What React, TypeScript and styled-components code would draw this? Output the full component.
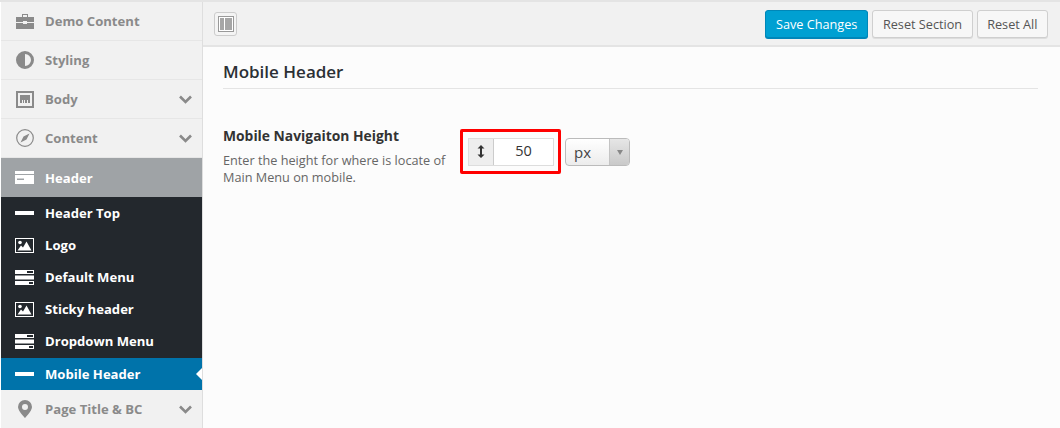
import React from 'react'
import styled, { createGlobalStyle } from 'styled-components'

const GlobalStyle = createGlobalStyle`
  html, body {
    margin: 0;
    padding: 0;
    background: #fff;
    font-family: 'Open Sans', sans-serif;
  }
`

const Page = styled.div`
  width: 1060px;
  height: 428px;
  overflow: hidden;
  display: grid;
  grid-template-columns: 202px 1fr;
  box-sizing: border-box;
  border-top: 2px solid #e4e4e4;
  padding-left: 1px;
`
const Sidebar = styled.nav`
  background: #f1f1f1;
  border-right: 1px solid #dedede;
  display: flex;
  flex-direction: column;
`
const Row = styled.div`
  height: 38px;
  border-bottom: 1px solid #e6e6e6;
  padding: 0 10px 0 14px;
  display: flex;
  align-items: center;
  gap: 11px;
  color: #8a8a8a;
  font-size: 13.1px;
  font-weight: 700;
`
const ActiveGroup = styled.div`
  height: 39px;
  background: #9fa3a6;
  padding: 0 10px 0 14px;
  display: flex;
  align-items: center;
  gap: 11px;
  color: #fff;
  font-size: 13.1px;
  font-weight: 700;
`
const SubMenu = styled.div`
  background: #23282d;
  display: flex;
  flex-direction: column;
`
const SubRow = styled.div<{ $active?: boolean }>`
  position: relative;
  height: 32px;
  margin-top: ${p => (p.$active ? '1px' : '0')};
  padding: 0 10px 0 14px;
  display: flex;
  align-items: center;
  gap: 11px;
  color: #fff;
  font-size: 13.1px;
  font-weight: 700;
  background: ${p => (p.$active ? '#0073aa' : 'transparent')};
`
const Notch = styled.span`
  position: absolute;
  right: 0;
  top: 10px;
  border: 6px solid transparent;
  border-left: 0;
  border-right-color: #fff;
`
const IconSlot = styled.span`
  width: 19px;
  height: 19px;
  flex: none;
  display: flex;
  align-items: center;
  justify-content: center;
`
const Label = styled.span`
  flex: 1;
  white-space: nowrap;
`
const Main = styled.main`
  background: #fcfcfc;
  display: flex;
  flex-direction: column;
`
const Toolbar = styled.header`
  height: 45px;
  box-sizing: border-box;
  background: #f1f1f1;
  border-bottom: 2px solid #e4e4e4;
  padding: 8px 12px 0 11px;
  display: flex;
  align-items: flex-start;
  justify-content: space-between;
`
const ToggleButton = styled.button`
  width: 23px;
  height: 24px;
  margin-top: 2px;
  padding: 0;
  background: #f4f4f4;
  border: 1px solid #ccc;
  border-radius: 3px;
  display: flex;
  align-items: center;
  justify-content: center;
`
const Actions = styled.div`
  display: flex;
  gap: 4px;
`
const Button = styled.button<{ $primary?: boolean }>`
  height: 28px;
  box-sizing: border-box;
  padding: 0 ${p => (p.$primary ? '10px' : '9.5px')};
  font-family: 'Open Sans', sans-serif;
  font-size: 12.7px;
  border-radius: 3px;
  border: 1px solid ${p => (p.$primary ? '#0087b8' : '#cfcfcf')};
  background: ${p => (p.$primary ? '#00a0d2' : '#f7f7f7')};
  color: ${p => (p.$primary ? '#fff' : '#555')};
  box-shadow: 0 1px 0 ${p => (p.$primary ? '#0085ba' : '#ddd')};
`
const Content = styled.section`
  padding: 0 22px 0 20px;
`
const Title = styled.h2`
  margin: 0;
  height: 42px;
  box-sizing: border-box;
  padding-top: 14px;
  border-bottom: 1px solid #e4e4e4;
  font-size: 17px;
  line-height: 22px;
  font-weight: 600;
  color: #2b3035;
`
const Field = styled.div`
  margin-top: 37px;
  display: flex;
  align-items: flex-start;
`
const FieldText = styled.div`
  width: 237px;
`
const FieldName = styled.div`
  font-size: 13.85px;
  line-height: 20px;
  font-weight: 700;
  color: #333;
`
const FieldHelp = styled.div`
  margin-top: 6px;
  font-size: 12.7px;
  line-height: 17px;
  color: #666;
`
const Highlight = styled.div`
  box-sizing: border-box;
  width: 101px;
  height: 45px;
  margin-top: 3px;
  padding: 6px 5px 5px;
  border: 3px solid #f00;
  border-radius: 2px;
`
const DimensionInput = styled.div`
  width: 86px;
  height: 28px;
  box-sizing: border-box;
  display: flex;
  border: 1px solid #ddd;
  background: #fff;
`
const Addon = styled.span`
  width: 25px;
  padding-bottom: 1px;
  box-sizing: border-box;
  background: #eee;
  border-right: 1px solid #ccc;
  display: flex;
  align-items: center;
  justify-content: center;
`
const Value = styled.span`
  flex: 1;
  text-align: center;
  font-size: 14.5px;
  line-height: 24px;
  color: #333;
`
const UnitSelect = styled.div`
  margin: 12px 0 0 4px;
  width: 65px;
  height: 28px;
  box-sizing: border-box;
  border: 1px solid #bbb;
  border-radius: 4px;
  background: linear-gradient(#fff, #ececec);
  display: flex;
  overflow: hidden;
`
const UnitLabel = styled.span`
  flex: 1;
  padding-left: 8px;
  font-size: 15px;
  line-height: 27px;
  color: #444;
`
const UnitArrow = styled.span`
  width: 19px;
  border-left: 1px solid #c4c4c4;
  background: linear-gradient(#e6e6e6, #c9c9c9);
  display: flex;
  align-items: center;
  justify-content: center;

  &::after {
    content: '';
    border: 3.5px solid transparent;
    border-top: 5px solid #888;
    border-bottom: 0;
  }
`

const Briefcase = () => (
  <svg width="18" height="15" viewBox="0 0 18 15" fill="currentColor">
    <path d="M6 0h6v3h-1V1H7v2H6zM0 3h18v5h-7V7H7v1H0zM0 9h7v1h4V9h7v6H0z" />
  </svg>
)
const Contrast = () => (
  <svg width="18" height="18" viewBox="0 0 18 18" fill="currentColor">
    <path fillRule="evenodd" d="M9 0a9 9 0 1 0 0 18A9 9 0 0 0 9 0zm0 3a6 6 0 0 1 0 12z" />
  </svg>
)
const BodyIcon = () => (
  <svg width="18" height="17" viewBox="0 0 18 17" fill="currentColor">
    <path fillRule="evenodd" d="M0 0h18v17H0zM2 2v13h14V2zM4 4h10v8h-2V9h-1v3H9V9H8v3H7V9H6v3H4z" />
  </svg>
)
const Compass = () => (
  <svg width="18" height="18" viewBox="0 0 18 18" fill="none" stroke="currentColor">
    <circle cx="9" cy="9" r="8.3" strokeWidth="1.2" />
    <path d="M13.5 4.5 10.5 10.5 7.5 7.5zM7.5 7.5 4.5 13.5l6-3z" fill="currentColor" stroke="none" />
  </svg>
)
const HeaderIcon = () => (
  <svg width="19" height="13" viewBox="0 0 19 13" fill="currentColor">
    <path d="M0 0h19v3H0zM0 4h19v9H0zM2 7.5v1.500h7V7.500z" fillRule="evenodd" />
  </svg>
)
const Bar = () => (
  <svg width="19" height="4" viewBox="0 0 19 4" fill="currentColor">
    <rect width="19" height="4" />
  </svg>
)
const ImageIcon = () => (
  <svg width="19" height="15" viewBox="0 0 19 15" fill="currentColor">
    <path fillRule="evenodd" d="M0 0h19v15H0zM1 1v13h17V1z" />
    <circle cx="5" cy="4.500" r="1.800" />
    <path d="M2.500 12.500 6 7.500l2 2 3.500-6 5 9z" />
  </svg>
)
const MenuIcon = () => (
  <svg width="19" height="15" viewBox="0 0 19 15" fill="currentColor">
    <path fillRule="evenodd" d="M0 0h19v4H0zM12 1v2h6V1zM0 5.500h19v4H0zM0 11h19v4H0zM14 12v2h4v-2z" />
  </svg>
)
const Pin = () => (
  <svg width="14" height="18" viewBox="0 0 14 18" fill="currentColor">
    <path fillRule="evenodd" d="M7 0a7 7 0 0 0-7 7c0 4 7 11 7 11s7-7 7-11a7 7 0 0 0-7-7zm0 4a3 3 0 1 1 0 6 3 3 0 0 1 0-6z" />
  </svg>
)
const Chevron = () => (
  <svg width="13" height="9" viewBox="0 0 13 9" fill="none" stroke="#8a8a8a" strokeWidth="2.6">
    <path d="M1 1.500 6.500 7 12 1.500" />
  </svg>
)
const SidebarToggle = () => (
  <svg width="16" height="16" viewBox="0 0 16 16">
    <rect x="0.500" y="0.500" width="15" height="15" fill="#fff" stroke="#999" />
    <rect x="2" y="2" width="4" height="12" fill="#a6a6a6" />
    <rect x="7" y="2" width="7" height="12" fill="#a6a6a6" />
  </svg>
)
const ResizeIcon = () => (
  <svg width="8" height="13" viewBox="0 0 8 13" fill="#333">
    <path d="M4 0l3.500 3.500H5v6h2.500L4 13 .5 9.500H3v-6H.5z" />
  </svg>
)

const App = () => (
  <>
    <GlobalStyle />
    <Page>
      <Sidebar>
        <Row><IconSlot><Briefcase /></IconSlot><Label>Demo Content</Label></Row>
        <Row><IconSlot><Contrast /></IconSlot><Label>Styling</Label></Row>
        <Row><IconSlot><BodyIcon /></IconSlot><Label>Body</Label><Chevron /></Row>
        <Row><IconSlot><Compass /></IconSlot><Label>Content</Label><Chevron /></Row>
        <ActiveGroup><IconSlot><HeaderIcon /></IconSlot><Label>Header</Label></ActiveGroup>
        <SubMenu>
          <SubRow><IconSlot><Bar /></IconSlot><Label>Header Top</Label></SubRow>
          <SubRow><IconSlot><ImageIcon /></IconSlot><Label>Logo</Label></SubRow>
          <SubRow><IconSlot><MenuIcon /></IconSlot><Label>Default Menu</Label></SubRow>
          <SubRow><IconSlot><ImageIcon /></IconSlot><Label>Sticky header</Label></SubRow>
          <SubRow><IconSlot><MenuIcon /></IconSlot><Label>Dropdown Menu</Label></SubRow>
          <SubRow $active><IconSlot><Bar /></IconSlot><Label>Mobile Header</Label><Notch /></SubRow>
        </SubMenu>
        <Row><IconSlot><Pin /></IconSlot><Label>Page Title &amp; BC</Label><Chevron /></Row>
      </Sidebar>
      <Main>
        <Toolbar>
          <ToggleButton><SidebarToggle /></ToggleButton>
          <Actions>
            <Button $primary>Save Changes</Button>
            <Button>Reset Section</Button>
            <Button>Reset All</Button>
          </Actions>
        </Toolbar>
        <Content>
          <Title>Mobile Header</Title>
          <Field>
            <FieldText>
              <FieldName>Mobile Navigaiton Height</FieldName>
              <FieldHelp>Enter the height for where is locate of Main Menu on mobile.</FieldHelp>
            </FieldText>
            <Highlight>
              <DimensionInput>
                <Addon><ResizeIcon /></Addon>
                <Value>50</Value>
              </DimensionInput>
            </Highlight>
            <UnitSelect>
              <UnitLabel>px</UnitLabel>
              <UnitArrow />
            </UnitSelect>
          </Field>
        </Content>
      </Main>
    </Page>
  </>
)

export default App
